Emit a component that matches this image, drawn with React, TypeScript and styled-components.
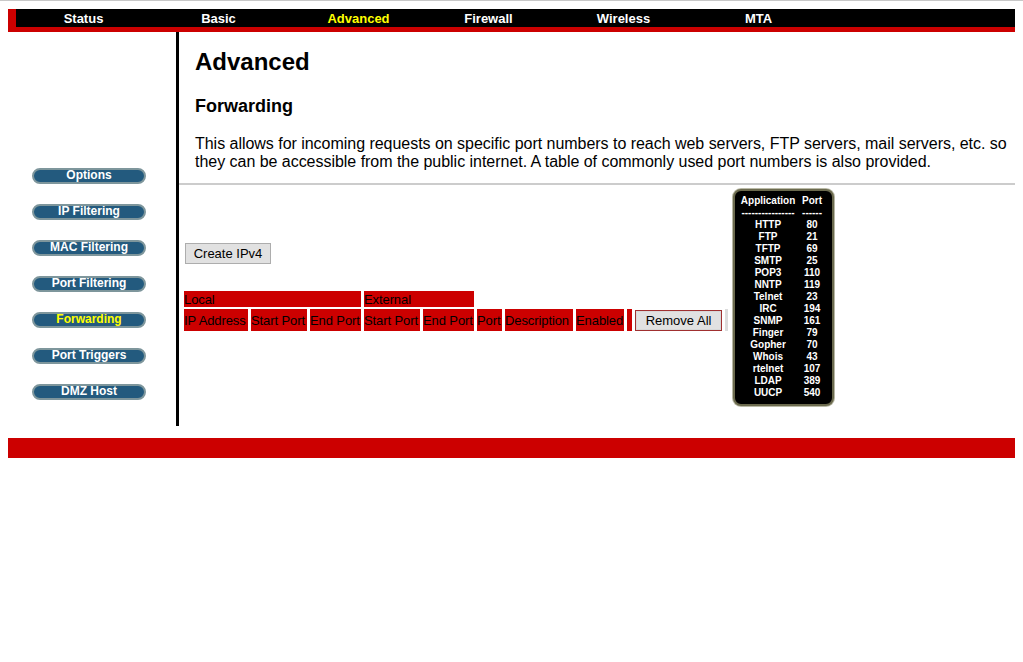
import React from "react";
import styled, { createGlobalStyle } from "styled-components";

const Global = createGlobalStyle`
  html { border-top: 1px solid #c8c8c8; }
  body { margin: 8px; background: #fff; font-family: "Liberation Sans", Arial, sans-serif; color: #000; }
`;

const Page = styled.div`
  width: 1008px;
`;

const NavBar = styled.div`
  display: flex;
  height: 18px;
  background: #000;
  border-left: 8px solid #cc0000;
  border-bottom: 5px solid #cc0000;
`;

const NavItem = styled.div<{ $w: number; $active?: boolean }>`
  width: ${(p) => p.$w}px;
  flex: none;
  text-align: center;
  font-size: 13px;
  font-weight: bold;
  line-height: 19px;
  color: ${(p) => (p.$active ? "#ffff00" : "#ffffff")};
`;

const Body = styled.div`
  display: flex;
  min-height: 394px;
`;

const Sidebar = styled.div`
  width: 144px;
  flex: none;
  border-right: 3px solid #000;
  padding: 136px 0 0 24px;
  display: flex;
  flex-direction: column;
  gap: 20px;
`;

const SideButton = styled.div<{ $active?: boolean }>`
  width: 110px;
  height: 12px;
  border: 2px solid #7e969c;
  border-radius: 8px;
  background: #235a7e;
  color: ${(p) => (p.$active ? "#ffff00" : "#ffffff")};
  font-size: 12px;
  font-weight: bold;
  line-height: 11px;
  text-align: center;
  white-space: nowrap;
`;

const Content = styled.div`
  flex: 1;
  display: flex;
  flex-direction: column;
`;

const Intro = styled.div`
  padding: 16px 0 0 16px;
`;

const Title = styled.h1`
  margin: 0;
  font-size: 24px;
  line-height: 28px;
  font-weight: bold;
`;

const SubTitle = styled.h2`
  margin: 20px 0 0;
  font-size: 18px;
  line-height: 21px;
  font-weight: bold;
`;

const Text = styled.p`
  margin: 18px 0 0;
  font-size: 16px;
  line-height: 18px;
  letter-spacing: -0.03px;
`;

const Rule = styled.div`
  margin-top: 12px;
  height: 2px;
  background: #cccccc;
`;

const Lower = styled.div`
  display: flex;
  align-items: flex-start;
  gap: 2px;
  padding-top: 4px;
`;

const FormArea = styled.div`
  padding-left: 5px;
  display: flex;
  flex-direction: column;
  align-items: flex-start;
`;

const Button = styled.button<{ $focus?: boolean }>`
  font-family: "Liberation Sans", Arial, sans-serif;
  font-size: 13px;
  height: 21px;
  padding: 0 7px;
  background: #e1e1e1;
  color: #000;
  border: 1px solid ${(p) => (p.$focus ? "#a03030" : "#adadad")};
  box-shadow: ${(p) => (p.$focus ? "inset 0 0 0 1px #d8d8d8" : "none")};
  border-radius: 0;
  cursor: pointer;
  white-space: nowrap;
`;

const CreateButton = styled(Button)`
  margin: 54px 0 0 1px;
  width: 86px;
`;

const RemoveButton = styled(Button)`
  width: 87px;
  display: block;
`;

const Grid = styled.table`
  margin: 25px 0 0 -3px;
  border-collapse: separate;
  border-spacing: 3px 2px;
  table-layout: fixed;
  width: 550px;
`;

const Head = styled.th<{ $h: number }>`
  background: #cc0000;
  color: #000;
  font-size: 13px;
  font-weight: normal;
  text-align: left;
  padding: 0;
  height: ${(p) => p.$h}px;
  white-space: nowrap;
  overflow: hidden;
  letter-spacing: -0.1px;
`;

const BlankHead = styled.th`
  padding: 0;
  background: #dcdcdc;
`;

const ButtonCell = styled.td`
  padding: 0;
`;

const PortCard = styled.div`
  width: 93px;
  border: 2px solid #6b6a4e;
  box-shadow: 0 0 0 1px #b9b9a6;
  border-radius: 8px;
  background: #000;
  padding: 4px 0 6px 4px;
  display: grid;
  grid-template-columns: 58px 30px;
  grid-auto-rows: 12px;
  color: #fff;
  font-size: 10px;
  font-weight: bold;
  line-height: 12px;
  text-align: center;
  height: 203px;
`;

const CardCell = styled.div`
  white-space: nowrap;
  overflow: hidden;
`;

const Footer = styled.div`
  margin-top: 12px;
  height: 20px;
  background: #cc0000;
`;

const navItems: [string, number, boolean?][] = [
  ["Status", 135],
  ["Basic", 135],
  ["Advanced", 145, true],
  ["Firewall", 115],
  ["Wireless", 155],
  ["MTA", 115],
];

const sideItems = [
  "Options",
  "IP Filtering",
  "MAC Filtering",
  "Port Filtering",
  "Forwarding",
  "Port Triggers",
  "DMZ Host",
];

const ports: [string, string][] = [
  ["Application", "Port"],
  ["----------------", "------"],
  ["HTTP", "80"],
  ["FTP", "21"],
  ["TFTP", "69"],
  ["SMTP", "25"],
  ["POP3", "110"],
  ["NNTP", "119"],
  ["Telnet", "23"],
  ["IRC", "194"],
  ["SNMP", "161"],
  ["Finger", "79"],
  ["Gopher", "70"],
  ["Whois", "43"],
  ["rtelnet", "107"],
  ["LDAP", "389"],
  ["UUCP", "540"],
];

const cols: [string, number][] = [
  ["IP Address", 64],
  ["Start Port", 56],
  ["End Port", 51],
  ["Start Port", 56],
  ["End Port", 51],
  ["Port", 25],
  ["Description", 68],
  ["Enabled", 48],
  ["", 5],
];

const colWidths = [...cols.map(([, w]) => w), 87, 3];

export default function App() {
  return (
    <Page>
      <Global />
      <NavBar>
        {navItems.map(([label, w, active]) => (
          <NavItem key={label} $w={w} $active={active}>
            {label}
          </NavItem>
        ))}
      </NavBar>
      <Body>
        <Sidebar>
          {sideItems.map((s) => (
            <SideButton key={s} $active={s === "Forwarding"}>
              {s}
            </SideButton>
          ))}
        </Sidebar>
        <Content>
          <Intro>
            <Title>Advanced</Title>
            <SubTitle>Forwarding</SubTitle>
            <Text>
              This allows for incoming requests on specific port numbers to reach web servers, FTP servers, mail
              servers, etc. so they can be accessible from the public internet. A table of commonly used port numbers
              is also provided.
            </Text>
          </Intro>
          <Rule />
          <Lower>
            <FormArea>
              <CreateButton>Create IPv4</CreateButton>
              <Grid>
                <colgroup>
                  {colWidths.map((w, i) => (
                    <col key={i} style={{ width: w }} />
                  ))}
                </colgroup>
                <thead>
                  <tr>
                    <Head $h={16} colSpan={3}>Local</Head>
                    <Head $h={16} colSpan={2}>External</Head>
                  </tr>
                  <tr>
                    {cols.map(([c], i) => (
                      <Head key={i} $h={22}>
                        {c}
                      </Head>
                    ))}
                    <ButtonCell>
                      <RemoveButton $focus>Remove All</RemoveButton>
                    </ButtonCell>
                    <BlankHead />
                  </tr>
                </thead>
              </Grid>
            </FormArea>
            <PortCard>
              {ports.map(([a, p], i) => (
                <React.Fragment key={i}>
                  <CardCell>{a}</CardCell>
                  <CardCell>{p}</CardCell>
                </React.Fragment>
              ))}
            </PortCard>
          </Lower>
        </Content>
      </Body>
      <Footer />
    </Page>
  );
}
